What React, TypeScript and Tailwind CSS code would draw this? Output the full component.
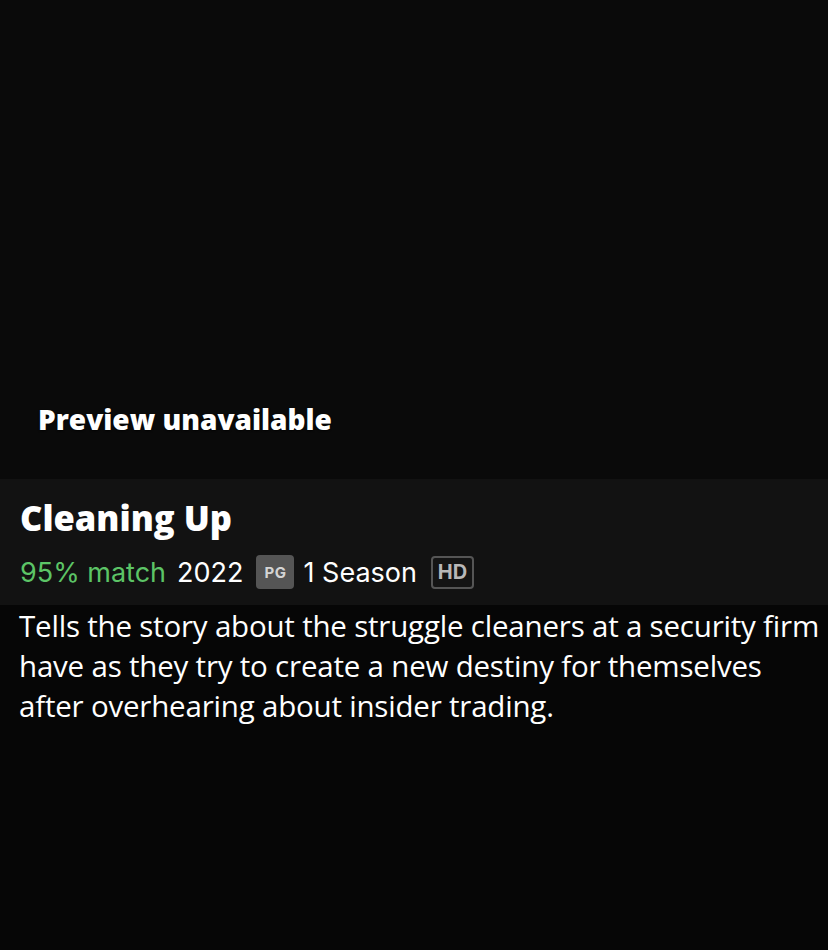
export default function App() {
  return (
    <div className="flex h-[950px] w-[828px] flex-col bg-[#060606]">
      <div className="flex h-[479px] flex-col justify-end bg-[#0a0a0a] pb-[46px] pl-[38px]">
        <p
          className="text-[28px] leading-none font-extrabold text-white [text-shadow:0_1px_2px_rgba(0,0,0,0.8)]"
          style={{ fontFamily: '"Open Sans", sans-serif' }}
        >
          Preview unavailable
        </p>
      </div>
      <div className="flex h-[126px] flex-col bg-[#121212] px-5 pt-[19px]">
        <h1
          className="text-[34.5px] leading-[40px] font-extrabold text-white"
          style={{ fontFamily: '"Open Sans", sans-serif' }}
        >
          Cleaning Up
        </h1>
        <div
          className="mt-[17px] flex items-center text-[27px] leading-none text-white"
          style={{ fontFamily: 'Inter, sans-serif' }}
        >
          <span className="text-[#5cc466]">95% match</span>
          <span className="ml-[11px]">2022</span>
          <span className="ml-[13px] flex h-[34px] w-[38px] items-center justify-center rounded-[4px] bg-[#555555] text-[15px] font-bold tracking-[0.5px] text-[#d4d4d4]">
            PG
          </span>
          <span className="ml-[9px]">1 Season</span>
          <span className="ml-[14px] flex h-[33px] w-[43px] items-center justify-center rounded-[4px] border-2 border-[#555555] bg-[#141414] text-[20px] font-bold text-[#b8b8b8]">
            HD
          </span>
        </div>
      </div>
      <p
        className="pt-[1px] pr-[4px] pl-[19px] text-[29.5px] leading-[40px] tracking-[-0.2px] text-white"
        style={{ fontFamily: '"Open Sans", sans-serif' }}
      >
        Tells the story about the struggle cleaners at a security firm have as they try to create a new destiny for
        themselves after overhearing about insider trading.
      </p>
    </div>
  );
}
